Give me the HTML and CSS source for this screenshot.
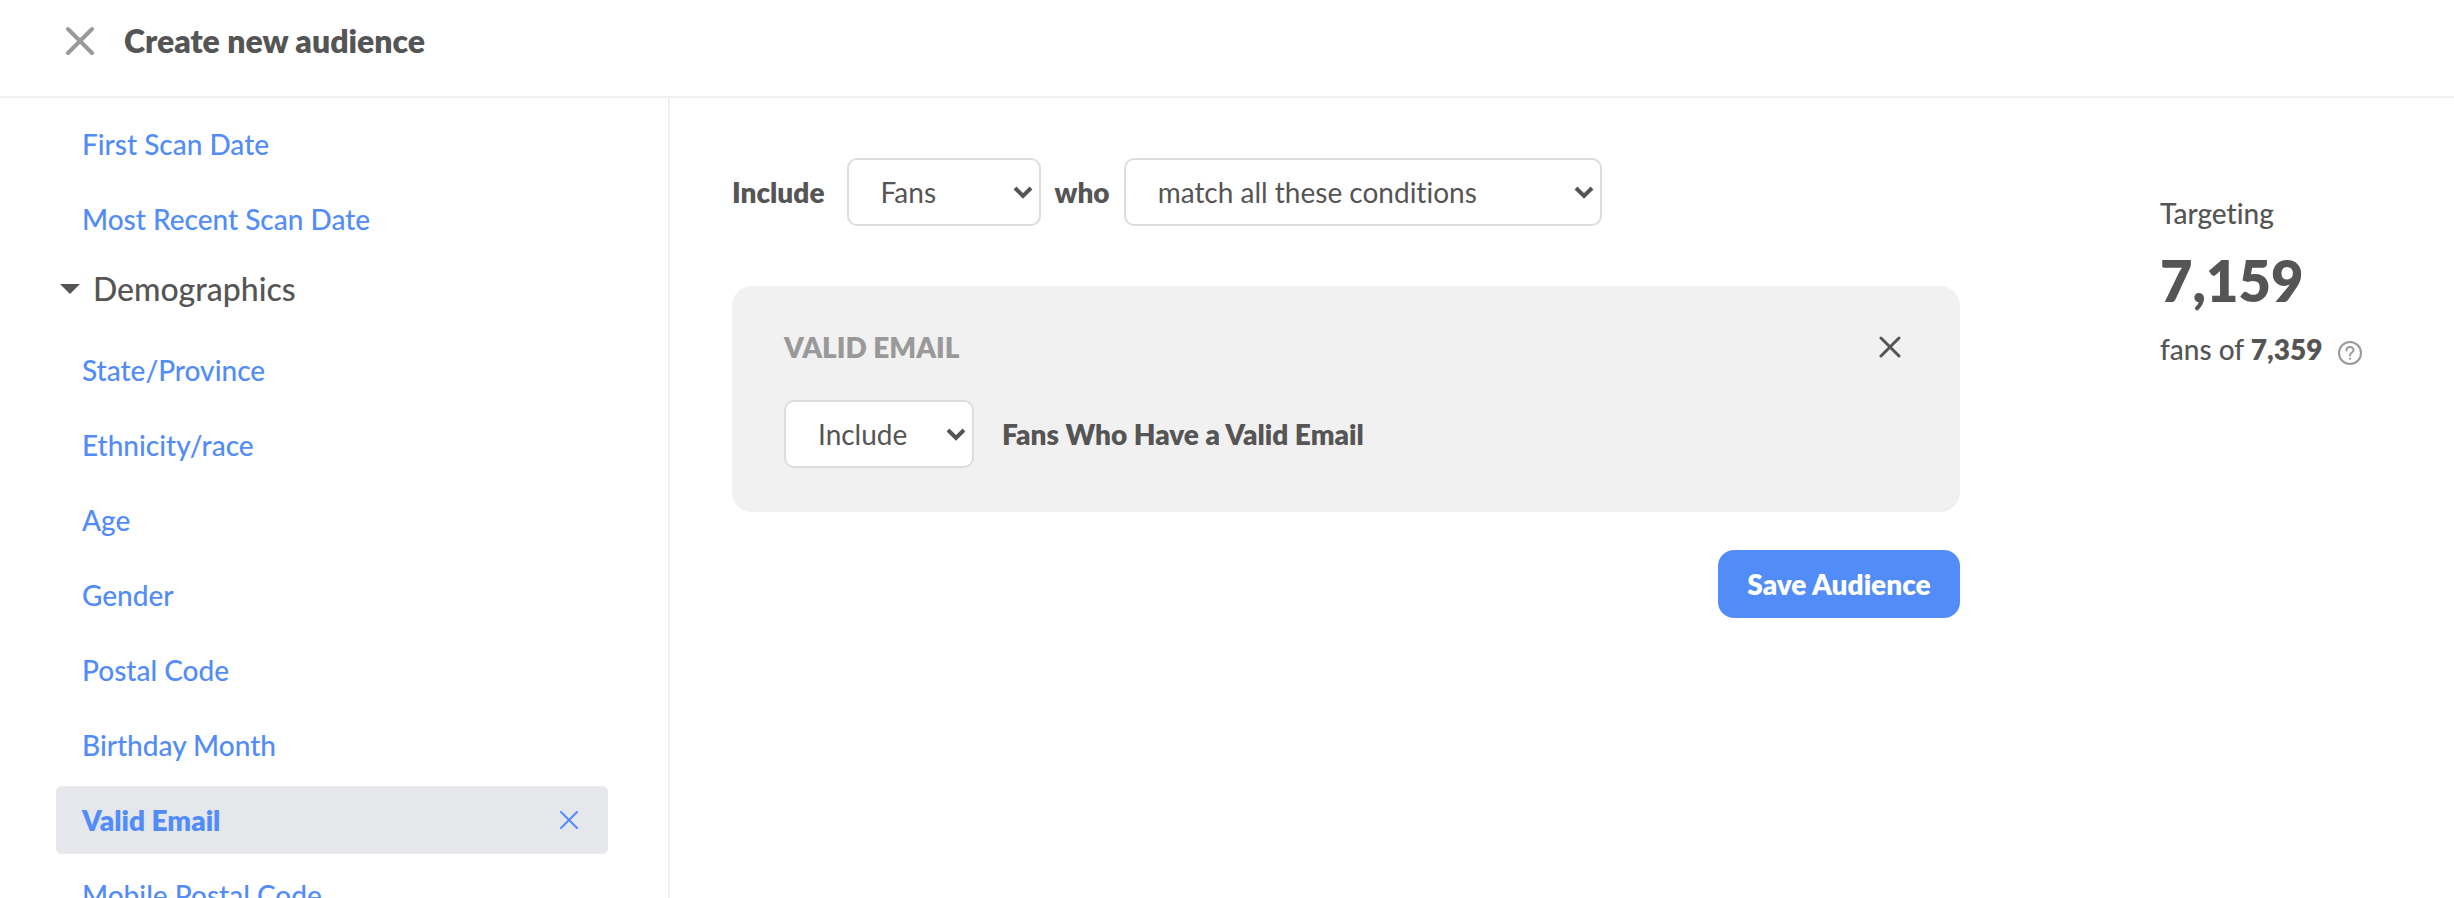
FILE: index.html
```html
<!doctype html>
<html lang="en">
<head>
    <meta charset="UTF-8">
    <meta name="viewport" content="width=device-width, initial-scale=1.0">
    <title>Create new audience</title>
    <link rel="stylesheet" href="styles.css">
</head>
<body>

<header class="topbar">
    <button type="button" class="close" aria-label="Close">
        <svg width="30" height="30" viewBox="0 0 30 30"><path d="M3 3L27 27M27 3L3 27"/></svg>
    </button>
    <h1>Create new audience</h1>
</header>

<div class="layout">
    <!-- filters -->
    <nav class="sidebar">
        <ul class="filters">
            <li><a href="#">First Scan Date</a></li>
            <li><a href="#">Most Recent Scan Date</a></li>
        </ul>
        <button type="button" class="group" aria-expanded="true">
            <svg width="20" height="10" viewBox="0 0 20 10"><path d="M0 0H20L10 10Z"/></svg>
            Demographics
        </button>
        <ul class="filters">
            <li><a href="#">State/Province</a></li>
            <li><a href="#">Ethnicity/race</a></li>
            <li><a href="#">Age</a></li>
            <li><a href="#">Gender</a></li>
            <li><a href="#">Postal Code</a></li>
            <li><a href="#">Birthday Month</a></li>
            <li class="active">
                <a href="#">Valid Email</a>
                <button type="button" class="remove" aria-label="Remove Valid Email">
                    <svg width="18" height="18" viewBox="0 0 18 18"><path d="M1 1L17 17M17 1L1 17"/></svg>
                </button>
            </li>
            <li><a href="#">Mobile Postal Code</a></li>
        </ul>
    </nav>

    <main class="main">
        <form class="builder">
            <div class="match">
                <label for="who">Include</label>
                <div class="select select-who">
                    <select id="who">
                        <option>Fans</option>
                    </select>
                    <svg width="20" height="14" viewBox="0 0 20 14"><path d="M2 2L10 10L18 2"/></svg>
                </div>
                <label for="conditions">who</label>
                <div class="select select-conditions">
                    <select id="conditions">
                        <option>match all these conditions</option>
                    </select>
                    <svg width="20" height="14" viewBox="0 0 20 14"><path d="M2 2L10 10L18 2"/></svg>
                </div>
            </div>

            <section class="card">
                <div class="card-head">
                    <h2>VALID EMAIL</h2>
                    <button type="button" class="card-close" aria-label="Remove condition">
                        <svg width="22" height="22" viewBox="0 0 22 22"><path d="M2 2L20 20M20 2L2 20"/></svg>
                    </button>
                </div>
                <div class="condition">
                    <div class="select select-include">
                        <select id="include">
                            <option>Include</option>
                        </select>
                        <svg width="20" height="14" viewBox="0 0 20 14"><path d="M2 2L10 10L18 2"/></svg>
                    </div>
                    <label for="include">Fans Who Have a Valid Email</label>
                </div>
            </section>

            <button type="submit" class="save">Save Audience</button>
        </form>

        <aside class="targeting">
            <p>Targeting</p>
            <p class="count">7,159</p>
            <p class="total">
                <span>fans of <b>7,359</b></span>
                <svg width="24" height="24" viewBox="0 0 24 24">
                    <circle cx="12" cy="12" r="11"/>
                    <path d="M8.500 9.500C8.500 4.800 15.500 4.800 15.500 9.200C15.500 11.600 12 11.600 12 14.500M12 17.500V18"/>
                </svg>
            </p>
        </aside>
    </main>
</div>

</body>
</html>
```

FILE: styles.css
```css
* {
    margin: 0;
    padding: 0;
    box-sizing: border-box;
}

ul {
    list-style: none;
}

body {
    height: 100vh;
    display: flex;
    flex-direction: column;
    overflow: hidden;
    background: #fff;
    color: #555;
    font-family: Lato, "Liberation Sans", sans-serif;
    font-size: 28px;
    font-weight: 500;
    line-height: 34px;
    font-variant-ligatures: none;
}

button, select {
    font: inherit;
    font-variant-ligatures: none;
    color: inherit;
    border: none;
    background: none;
    cursor: pointer;
}

svg {
    display: block;
    flex: none;
    fill: none;
    stroke: currentColor;
    stroke-linecap: round;
}

.topbar {
    flex: none;
    display: flex;
    align-items: center;
    gap: 29px;
    padding: 20px 65px 34px;
    border-bottom: 2px solid #f0f0f0;
}

.topbar h1 {
    font-size: 32px;
    line-height: 42px;
    font-weight: 800;
}

.close {
    color: #999;
    stroke-width: 4;
}

.layout {
    flex: 1;
    min-height: 0;
    display: flex;
}

/* sidebar */
.sidebar {
    flex: none;
    width: 670px;
    padding: 12px 60px 0 56px;
    border-right: 2px solid #f0f0f0;
    overflow-y: auto;
    scrollbar-width: none;
}

.filters {
    display: flex;
    flex-direction: column;
    gap: 7px;
}

.filters li {
    display: flex;
    align-items: center;
    height: 68px;
    padding: 0 30px 0 26px;
    border-radius: 6px;
    color: #528cf8;
}

.filters a {
    flex: 1;
    color: inherit;
    text-decoration: none;
}

.filters .active {
    background: #e5e7eb;
    font-weight: 800;
}

.remove {
    stroke-width: 2;
}

.group {
    display: flex;
    align-items: center;
    gap: 13px;
    height: 60px;
    margin: 6px 0 17px;
    padding-left: 4px;
    font-size: 32px;
}

.group svg {
    fill: currentColor;
    stroke: none;
}

/* main */
.main {
    flex: 1;
    min-width: 0;
    display: flex;
    gap: 200px;
    padding: 60px 0 0 62px;
}

.builder {
    flex: 1;
    display: flex;
    flex-direction: column;
}

.match {
    display: flex;
    align-items: center;
    gap: 14px;
    margin-bottom: 60px;
}

label {
    font-weight: 800;
}

.select {
    position: relative;
}

.select select {
    appearance: none;
    width: 100%;
    height: 68px;
    padding: 0 32px;
    border: 2px solid #ddd;
    border-radius: 10px;
    background: #fff;
    font-weight: normal;
}

.select svg {
    position: absolute;
    right: 8px;
    top: 28px;
    stroke-width: 4;
    stroke-linecap: butt;
    pointer-events: none;
}

.select-who {
    width: 194px;
    margin-left: 8px;
}

.select-conditions {
    width: 478px;
}

.select-include {
    width: 190px;
}

.card {
    padding: 44px 52px;
    border-radius: 20px;
    background: #f1f1f1;
}

.card-head {
    display: flex;
    align-items: center;
    justify-content: space-between;
    padding-right: 7px;
    margin-bottom: 36px;
}

.card-head h2 {
    font-size: 28px;
    font-weight: 800;
    color: #999;
}

.card-close {
    stroke-width: 3;
}

.condition {
    display: flex;
    align-items: center;
    gap: 28px;
}

.save {
    align-self: flex-end;
    width: 242px;
    height: 68px;
    margin-top: 38px;
    border-radius: 16px;
    background: #528cf8;
    color: #fff;
    font-weight: 800;
}

.targeting {
    flex: none;
    width: 294px;
    padding-top: 38px;
}

.targeting .count {
    margin: 17px 0;
    font-size: 56px;
    line-height: 68px;
    font-weight: 800;
}

.total {
    display: flex;
    align-items: center;
    gap: 16px;
}

.total b {
    font-weight: 800;
}

.total svg {
    margin-top: 8px;
    color: #999;
    stroke-width: 2;
}
```
